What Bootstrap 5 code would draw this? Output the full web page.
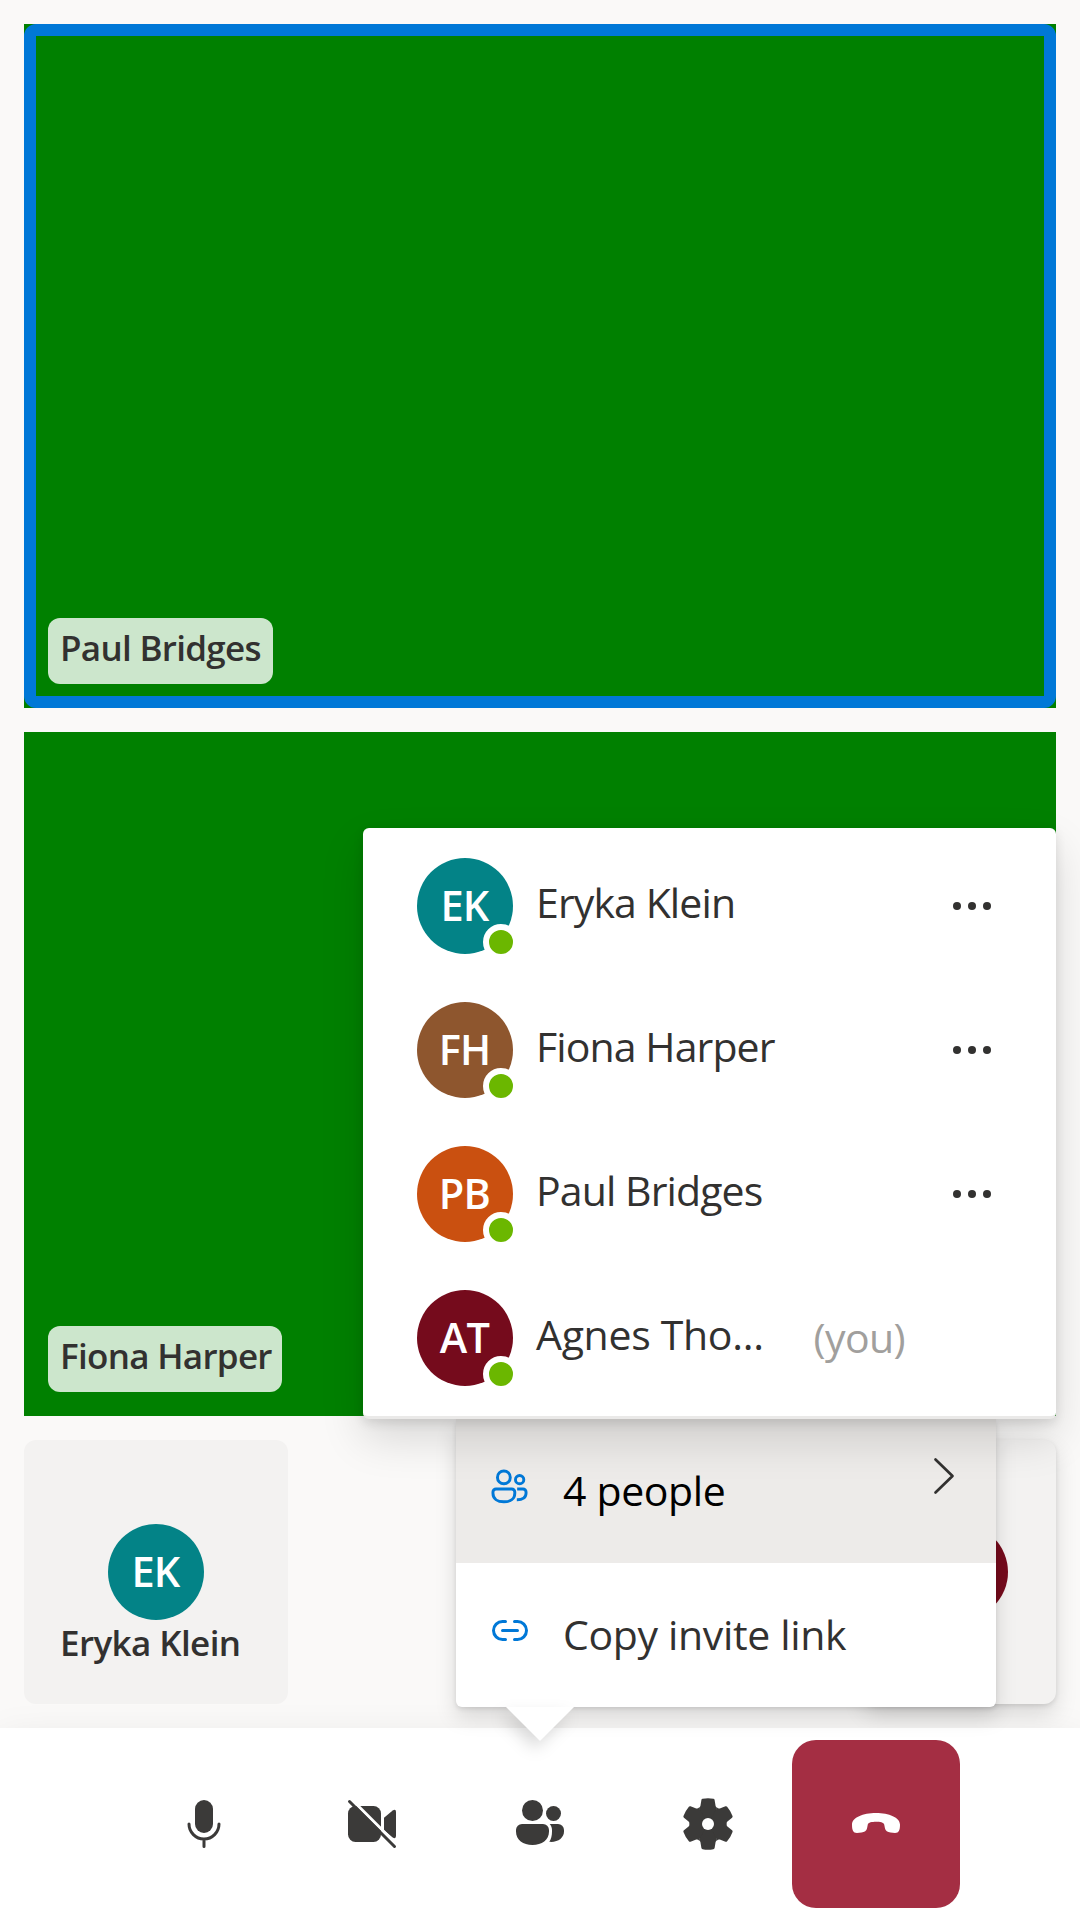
<!DOCTYPE html>
<html lang="en">
<head>
<meta charset="utf-8">
<meta name="viewport" content="width=device-width, initial-scale=1">
<title>Call</title>
<link href="https://cdn.jsdelivr.net/npm/bootstrap@5.3.0/dist/css/bootstrap.min.css" rel="stylesheet">
<style>
body{font-family:"Open Sans","Noto Sans",sans-serif;color:#323130;background:#faf9f8;font-stretch:90%;overflow:hidden}
.call-screen{width:1080px;height:1920px;overflow:hidden}
.stage{padding:24px;gap:24px}
.video-tile{height:684px;background:green;padding:24px}
.speaking::after{content:"";position:absolute;inset:0;border:12px solid #0078d7;border-radius:12px}
.name-tag{width:234px;height:66px;border-radius:12px;background:rgba(255,255,255,.8);padding-left:12px;font-size:35px;font-weight:600;line-height:59px;letter-spacing:-.7px;white-space:nowrap}
.speaking .name-tag{width:225px}
.mini-tile{height:264px;width:264px;border-radius:12px;background:#f3f2f1}
.self-tile{width:192px;box-shadow:0 10px 22px rgba(0,0,0,.132),0 2px 5px rgba(0,0,0,.108)}
.mini-tile .persona{margin-top:84px}
.mini-name{font-size:35px;font-weight:600;line-height:46px;letter-spacing:-.6px;padding-left:36px;white-space:nowrap}
.persona{width:96px;height:96px;border-radius:50%;color:#fff;font-size:41.5px;font-weight:600;line-height:95px;letter-spacing:-.8px;padding-right:1px;text-align:center;flex:none}
.teal{background:#038387}.brown{background:#8e562e}.orange{background:#ca5010}.wine{background:#750b1c}
.presence{position:absolute;right:-6px;bottom:-6px;width:36px;height:36px;border:6px solid #fff;border-radius:50%;background:#6bb700}
.control-bar{height:192px;padding:12px 120px;box-shadow:0 19px 43px rgba(0,0,0,.132)}
.ctl{width:168px;height:168px;border:0;border-radius:24px;background:none;padding:0}
.hangup{background:#a42e43}
.float-shadow{box-shadow:0 19.2px 43.2px rgba(0,0,0,.132),0 3.6px 10.8px rgba(0,0,0,.108)}
.more-menu{left:456px;top:1419px;width:540px;border-radius:6px;box-shadow:0 9.6px 21.6px rgba(0,0,0,.132),0 1.8px 5.4px rgba(0,0,0,.108)}
.menu-row{height:144px;font-size:41px;letter-spacing:-.35px;white-space:nowrap}
.menu-row svg{flex:none}
.menu-row .txt{line-height:143px}
.people-icon{margin:46px 31px 0 31px}
.link-icon{margin:56px 35px 0 36px}
.chevron{margin:37px 41px 0 0}
.hovered{background:#edebe9;color:#000}
.beak-box{left:50px;top:288px;width:68px;height:34px;overflow:visible;filter:drop-shadow(-5px 8px 8px rgba(0,0,0,.14))}
.people-menu{left:363px;top:828px;width:693px;height:591px;border-radius:6px;border-bottom:3px solid #eae9e8;padding:6px 0}
.person{height:144px;padding-left:54px;font-size:41px;white-space:nowrap}
.person .who{margin:0 0 7px 23px;letter-spacing:-.9px}
.person .who-short{letter-spacing:-.3px}
.you{color:#a19f9d;letter-spacing:-.6px;margin:0 151px 1px 0}
.dots{margin-right:60px}
</style>
<script src="https://cdn.jsdelivr.net/npm/bootstrap@5.3.0/dist/js/bootstrap.bundle.min.js"></script>
</head>
<body>
<div class="call-screen position-relative d-flex flex-column">
  <main class="stage d-flex flex-column flex-grow-1">
    <section class="video-tile speaking position-relative d-flex align-items-end"><div class="name-tag">Paul Bridges</div></section>
    <section class="video-tile d-flex align-items-end"><div class="name-tag">Fiona Harper</div></section>
    <section class="d-flex justify-content-between">
      <div class="mini-tile d-flex flex-column"><div class="persona teal align-self-center">EK</div><div class="mini-name">Eryka Klein</div></div>
      <div class="mini-tile self-tile d-flex flex-column"><div class="persona wine align-self-center">AT</div></div>
    </section>
  </main>

  <nav class="control-bar bg-white d-flex">
    <button class="ctl d-flex align-items-center justify-content-center" aria-label="Microphone"><svg width="60" height="60" viewBox="0 0 20 20" fill="none" stroke="#3b3a39" stroke-linecap="round"><rect x="7" y="2" width="6" height="11" rx="3" fill="#3b3a39" stroke="none"/><path d="M5 10a5 5 0 0 0 10 0M10 15v2.5"/></svg></button>
    <button class="ctl d-flex align-items-center justify-content-center" aria-label="Camera"><svg width="60" height="60" viewBox="0 0 20 20" fill="#3b3a39"><rect x="2" y="4" width="11" height="12" rx="2.5"/><path d="M14 7.9 16.9 5.5Q18 4.9 18 6V14Q18 15.1 16.9 14.5L14 12.1Z"/><path d="M2 .6 19 17.6" stroke="#fff"/><path d="M2.5 2.5l15 15" stroke="#3b3a39" stroke-linecap="round"/></svg></button>
    <button class="ctl d-flex align-items-center justify-content-center" aria-label="People"><svg width="60" height="60" viewBox="0 0 20 20" fill="#3b3a39"><circle cx="7.5" cy="5.5" r="3.5"/><circle cx="14.5" cy="6.5" r="2.5"/><path d="M4 10a2 2 0 0 0-2 2v.5C2 15.4 4.4 17 7.5 17s5.5-1.6 5.5-4.5V12a2 2 0 0 0-2-2ZM13.24 10c.47.53.76 1.23.76 2v.5c0 1.5-.3 2.5-.9 3.45C16 16.2 18 14.6 18 12.5V12a2 2 0 0 0-2-2Z"/></svg></button>
    <button class="ctl d-flex align-items-center justify-content-center" aria-label="Settings"><svg width="60" height="60" viewBox="-30 -30 60 60" fill="#3b3a39"><defs><path id="tooth" d="M0 0-9.35-16.2Q-8-16.4-7.6-18L-6.6-24Q-6.4-25.1-5.4-25.2Q0-26.2 5.4-25.2Q6.4-25.1 6.6-24L7.6-18Q8-16.4 9.35-16.2Z"/></defs><circle r="17"/><use href="#tooth"/><use href="#tooth" transform="rotate(60)"/><use href="#tooth" transform="rotate(120)"/><use href="#tooth" transform="rotate(180)"/><use href="#tooth" transform="rotate(240)"/><use href="#tooth" transform="rotate(300)"/><circle r="6" fill="#fff"/></svg></button>
    <button class="ctl hangup position-relative z-1 d-flex align-items-center justify-content-center" aria-label="Leave"><svg width="48" height="22" viewBox="0 0 48 22" fill="#fff"><path d="M0 11.5C0 4.5 11 0 24 0S48 4.5 48 11.5C48 17 47 20 43 20L38.5 19.5C35.5 19.2 33.5 17.5 33 15.5L32.2 11.5C31.8 9.3 28 8.7 24 8.7S16.2 9.3 15.8 11.5L15 15.5C14.5 17.5 12.5 19.2 9.5 19.5L5 20C1 20 0 17 0 11.5Z"/></svg></button>
  </nav>

  <div class="more-menu position-absolute bg-white">
    <svg class="beak-box position-absolute" viewBox="0 0 68 34"><path d="M0 0H68L34 34Z" fill="#fff"/></svg>
    <div class="menu-row hovered d-flex position-relative"><svg class="people-icon" width="45" height="45" viewBox="0 0 20 20" fill="none" stroke="#0078d7" stroke-width="1.3"><circle cx="7.5" cy="5.5" r="2.85"/><circle cx="14.5" cy="6.5" r="1.85"/><path d="M4 10.65h7a1.35 1.35 0 0 1 1.35 1.35v.5c0 2.5-2 3.85-4.85 3.85s-4.85-1.35-4.85-3.85V12A1.35 1.35 0 0 1 4 10.65ZM13.4 10.65H16a1.35 1.35 0 0 1 1.35 1.35v.5c0 1.9-1.5 3-4.1 2.95"/></svg><span class="txt">4 people</span><svg class="chevron ms-auto" width="24" height="40" viewBox="0 0 24 40" fill="none" stroke="#323130" stroke-width="2.7" stroke-linecap="round" stroke-linejoin="round"><path d="M4.5 3.5 21.5 20 4.5 36.5"/></svg></div>
    <div class="menu-row d-flex position-relative"><svg class="link-icon" width="36" height="23" viewBox="0 0 36 23" fill="none" stroke="#0078d7" stroke-width="3" stroke-linecap="round"><path d="M13.5 2.5h-3a9 9 0 0 0 0 18h3M22.5 2.5h3a9 9 0 0 1 0 18h-3M10.5 11.5h15"/></svg><span class="txt">Copy invite link</span></div>
  </div>

  <div class="people-menu position-absolute bg-white float-shadow">
    <div class="person d-flex align-items-center"><div class="persona teal position-relative">EK<i class="presence"></i></div><span class="who">Eryka Klein</span><svg class="dots ms-auto" width="48" height="12" viewBox="0 0 48 12" fill="#323130"><circle cx="9" cy="6" r="4"/><circle cx="24" cy="6" r="4"/><circle cx="39" cy="6" r="4"/></svg></div>
    <div class="person d-flex align-items-center"><div class="persona brown position-relative">FH<i class="presence"></i></div><span class="who">Fiona Harper</span><svg class="dots ms-auto" width="48" height="12" viewBox="0 0 48 12" fill="#323130"><circle cx="9" cy="6" r="4"/><circle cx="24" cy="6" r="4"/><circle cx="39" cy="6" r="4"/></svg></div>
    <div class="person d-flex align-items-center"><div class="persona orange position-relative">PB<i class="presence"></i></div><span class="who">Paul Bridges</span><svg class="dots ms-auto" width="48" height="12" viewBox="0 0 48 12" fill="#323130"><circle cx="9" cy="6" r="4"/><circle cx="24" cy="6" r="4"/><circle cx="39" cy="6" r="4"/></svg></div>
    <div class="person d-flex align-items-center"><div class="persona wine position-relative">AT<i class="presence"></i></div><span class="who who-short">Agnes Tho...</span><span class="you ms-auto">(you)</span></div>
  </div>
</div>
</body>
</html>
